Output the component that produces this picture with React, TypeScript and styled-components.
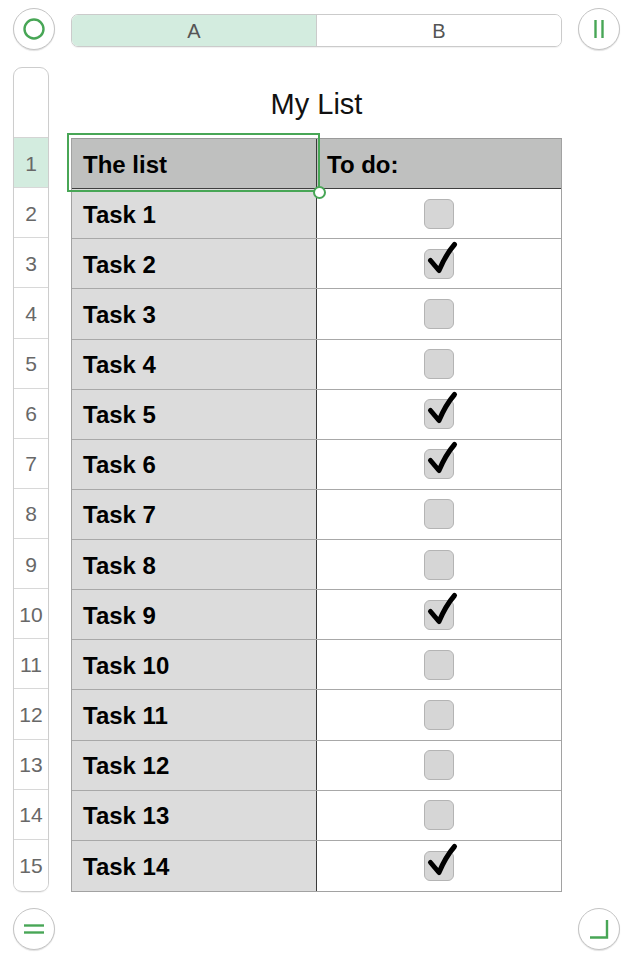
import React from "react";
import styled, { createGlobalStyle } from "styled-components";

const GREEN = "#48a656";
const ROW_H = 50.14;

const Global = createGlobalStyle`
  html, body { margin: 0; padding: 0; background: #ffffff; }
  body { font-family: "Liberation Sans", Arial, Helvetica, sans-serif; }
  * { box-sizing: border-box; }
`;

const Page = styled.div`
  width: 638px;
  height: 972px;
  padding: 8px 18px 0 13px;
  display: flex;
  flex-direction: column;
  background: #fff;
`;

const TopBar = styled.div`
  display: flex;
  align-items: flex-start;
  gap: 16px;
  height: 42px;
`;

const RoundButton = styled.button`
  width: 42px;
  height: 42px;
  flex: 0 0 42px;
  border-radius: 50%;
  border: 1px solid #c4c4c4;
  background: #fff;
  box-shadow: 0 1px 1px rgba(0, 0, 0, 0.12);
  padding: 0;
  display: flex;
  align-items: center;
  justify-content: center;
  svg { display: block; }
`;

const Tabs = styled.div`
  flex: 1;
  margin-top: 6px;
  height: 33px;
  display: grid;
  grid-template-columns: 245px 1fr;
  border: 1px solid #cbcbcb;
  border-radius: 7px;
  overflow: hidden;
  box-shadow: 0 1px 1px rgba(0, 0, 0, 0.06);
`;

const Tab = styled.div<{ $active?: boolean }>`
  display: flex;
  align-items: center;
  justify-content: center;
  padding-top: 1px;
  font-size: 20px;
  color: #555555;
  background: ${(p) => (p.$active ? "#d3ecdf" : "#fff")};
  border-right: ${(p) => (p.$active ? "1px solid #cbcbcb" : "none")};
`;

const Main = styled.div`
  display: flex;
  gap: 22px;
  margin-top: 17px;
`;

const RowHeaders = styled.div`
  width: 36px;
  border: 1px solid #cdcdcd;
  border-radius: 9px;
  overflow: hidden;
  display: flex;
  flex-direction: column;
  box-shadow: 0 1px 1px rgba(0, 0, 0, 0.06);
`;

const RowHeaderCorner = styled.div`
  height: 70px;
  border-bottom: 1px solid #d4d4d4;
`;

const RowHeaderCell = styled.div<{ $selected?: boolean }>`
  height: ${ROW_H}px;
  display: flex;
  align-items: center;
  justify-content: center;
  padding-top: 2px;
  font-size: 21px;
  color: #686868;
  background: ${(p) => (p.$selected ? "#d3ecdf" : "#fff")};
  border-bottom: 1px solid #d8d8d8;
  &:last-child { border-bottom: none; }
`;

const Sheet = styled.div`
  position: relative;
  width: 491px;
  display: flex;
  flex-direction: column;
`;

const Title = styled.div`
  height: 71px;
  display: flex;
  align-items: center;
  justify-content: center;
  padding-top: 3px;
  font-size: 29px;
  color: #111;
`;

const Table = styled.div`
  border: 1px solid #a2a2a2;
  border-top-color: #9a9a9a;
  display: flex;
  flex-direction: column;
`;

const Row = styled.div<{ $header?: boolean }>`
  height: ${ROW_H}px;
  display: grid;
  grid-template-columns: 245px 1fr;
  border-bottom: 1px solid ${(p) => (p.$header ? "#3f3f3f" : "#a8a8a8")};
  background: ${(p) => (p.$header ? "#bfc0bf" : "#fff")};
  &:last-child { border-bottom: none; }
`;

const NameCell = styled.div<{ $header?: boolean }>`
  display: flex;
  align-items: center;
  padding-left: 11px;
  padding-top: 2px;
  font-size: 24px;
  font-weight: bold;
  color: #000;
  background: ${(p) => (p.$header ? "transparent" : "#dcdcdc")};
  border-right: 1px solid #3a3a3a;
`;

const CheckCell = styled.div<{ $header?: boolean }>`
  display: flex;
  align-items: center;
  justify-content: ${(p) => (p.$header ? "flex-start" : "center")};
  padding-left: ${(p) => (p.$header ? "10px" : "0")};
  padding-top: ${(p) => (p.$header ? "2px" : "0")};
  font-size: 24px;
  font-weight: bold;
  color: #000;
`;

const Box = styled.div`
  position: relative;
  width: 30px;
  height: 30px;
  border-radius: 6px;
  background: #d6d6d6;
  border: 1px solid #b4b4b4;
  svg {
    position: absolute;
    left: -1px;
    top: -1px;
    overflow: visible;
  }
`;

const Selection = styled.div`
  position: absolute;
  left: -4px;
  top: 66px;
  width: 253px;
  height: 59px;
  border: 2px solid ${GREEN};
  pointer-events: none;
`;

const Handle = styled.div`
  position: absolute;
  left: 242px;
  top: 119px;
  width: 13px;
  height: 13px;
  border-radius: 50%;
  background: #fff;
  border: 2.5px solid ${GREEN};
`;

const BottomBar = styled.div`
  display: flex;
  justify-content: space-between;
  margin-top: 16px;
`;

const CheckMark = () => (
  <svg width="30" height="30" viewBox="0 0 30 30">
    <path
      d="M6.5 11.5 L15 21.5 C19 12 24 3 30.5 -4.5"
      fill="none"
      stroke="#000"
      strokeWidth="5"
      strokeLinecap="round"
      strokeLinejoin="round"
    />
  </svg>
);

const tasks: [string, boolean][] = [
  ["Task 1", false],
  ["Task 2", true],
  ["Task 3", false],
  ["Task 4", false],
  ["Task 5", true],
  ["Task 6", true],
  ["Task 7", false],
  ["Task 8", false],
  ["Task 9", true],
  ["Task 10", false],
  ["Task 11", false],
  ["Task 12", false],
  ["Task 13", false],
  ["Task 14", true],
];

export default function App() {
  return (
    <>
      <Global />
      <Page>
        <TopBar>
          <RoundButton aria-label="select">
            <svg width="24" height="24" viewBox="0 0 24 24">
              <circle cx="12" cy="12" r="9.5" fill="none" stroke={GREEN} strokeWidth="2.4" />
            </svg>
          </RoundButton>
          <Tabs>
            <Tab $active>A</Tab>
            <Tab>B</Tab>
          </Tabs>
          <RoundButton aria-label="columns">
            <svg width="24" height="24" viewBox="0 0 24 24">
              <line x1="8.5" y1="3" x2="8.5" y2="21" stroke={GREEN} strokeWidth="2.4" />
              <line x1="15.5" y1="3" x2="15.5" y2="21" stroke={GREEN} strokeWidth="2.4" />
            </svg>
          </RoundButton>
        </TopBar>

        <Main>
          <RowHeaders>
            <RowHeaderCorner />
            {Array.from({ length: 15 }, (_, i) => (
              <RowHeaderCell key={i} $selected={i === 0}>
                {i + 1}
              </RowHeaderCell>
            ))}
          </RowHeaders>

          <Sheet>
            <Title>My List</Title>
            <Table>
              <Row $header>
                <NameCell $header>The list</NameCell>
                <CheckCell $header>To do:</CheckCell>
              </Row>
              {tasks.map(([name, done]) => (
                <Row key={name}>
                  <NameCell>{name}</NameCell>
                  <CheckCell>
                    <Box>{done && <CheckMark />}</Box>
                  </CheckCell>
                </Row>
              ))}
            </Table>
            <Selection />
            <Handle />
          </Sheet>
        </Main>

        <BottomBar>
          <RoundButton aria-label="rows">
            <svg width="24" height="24" viewBox="0 0 24 24">
              <line x1="2" y1="8.5" x2="22" y2="8.5" stroke={GREEN} strokeWidth="2.4" />
              <line x1="2" y1="15.5" x2="22" y2="15.5" stroke={GREEN} strokeWidth="2.4" />
            </svg>
          </RoundButton>
          <RoundButton aria-label="resize">
            <svg width="24" height="24" viewBox="0 0 24 24">
              <path d="M3 20.5 H20 V3" fill="none" stroke={GREEN} strokeWidth="2.4" />
            </svg>
          </RoundButton>
        </BottomBar>
      </Page>
    </>
  );
}
